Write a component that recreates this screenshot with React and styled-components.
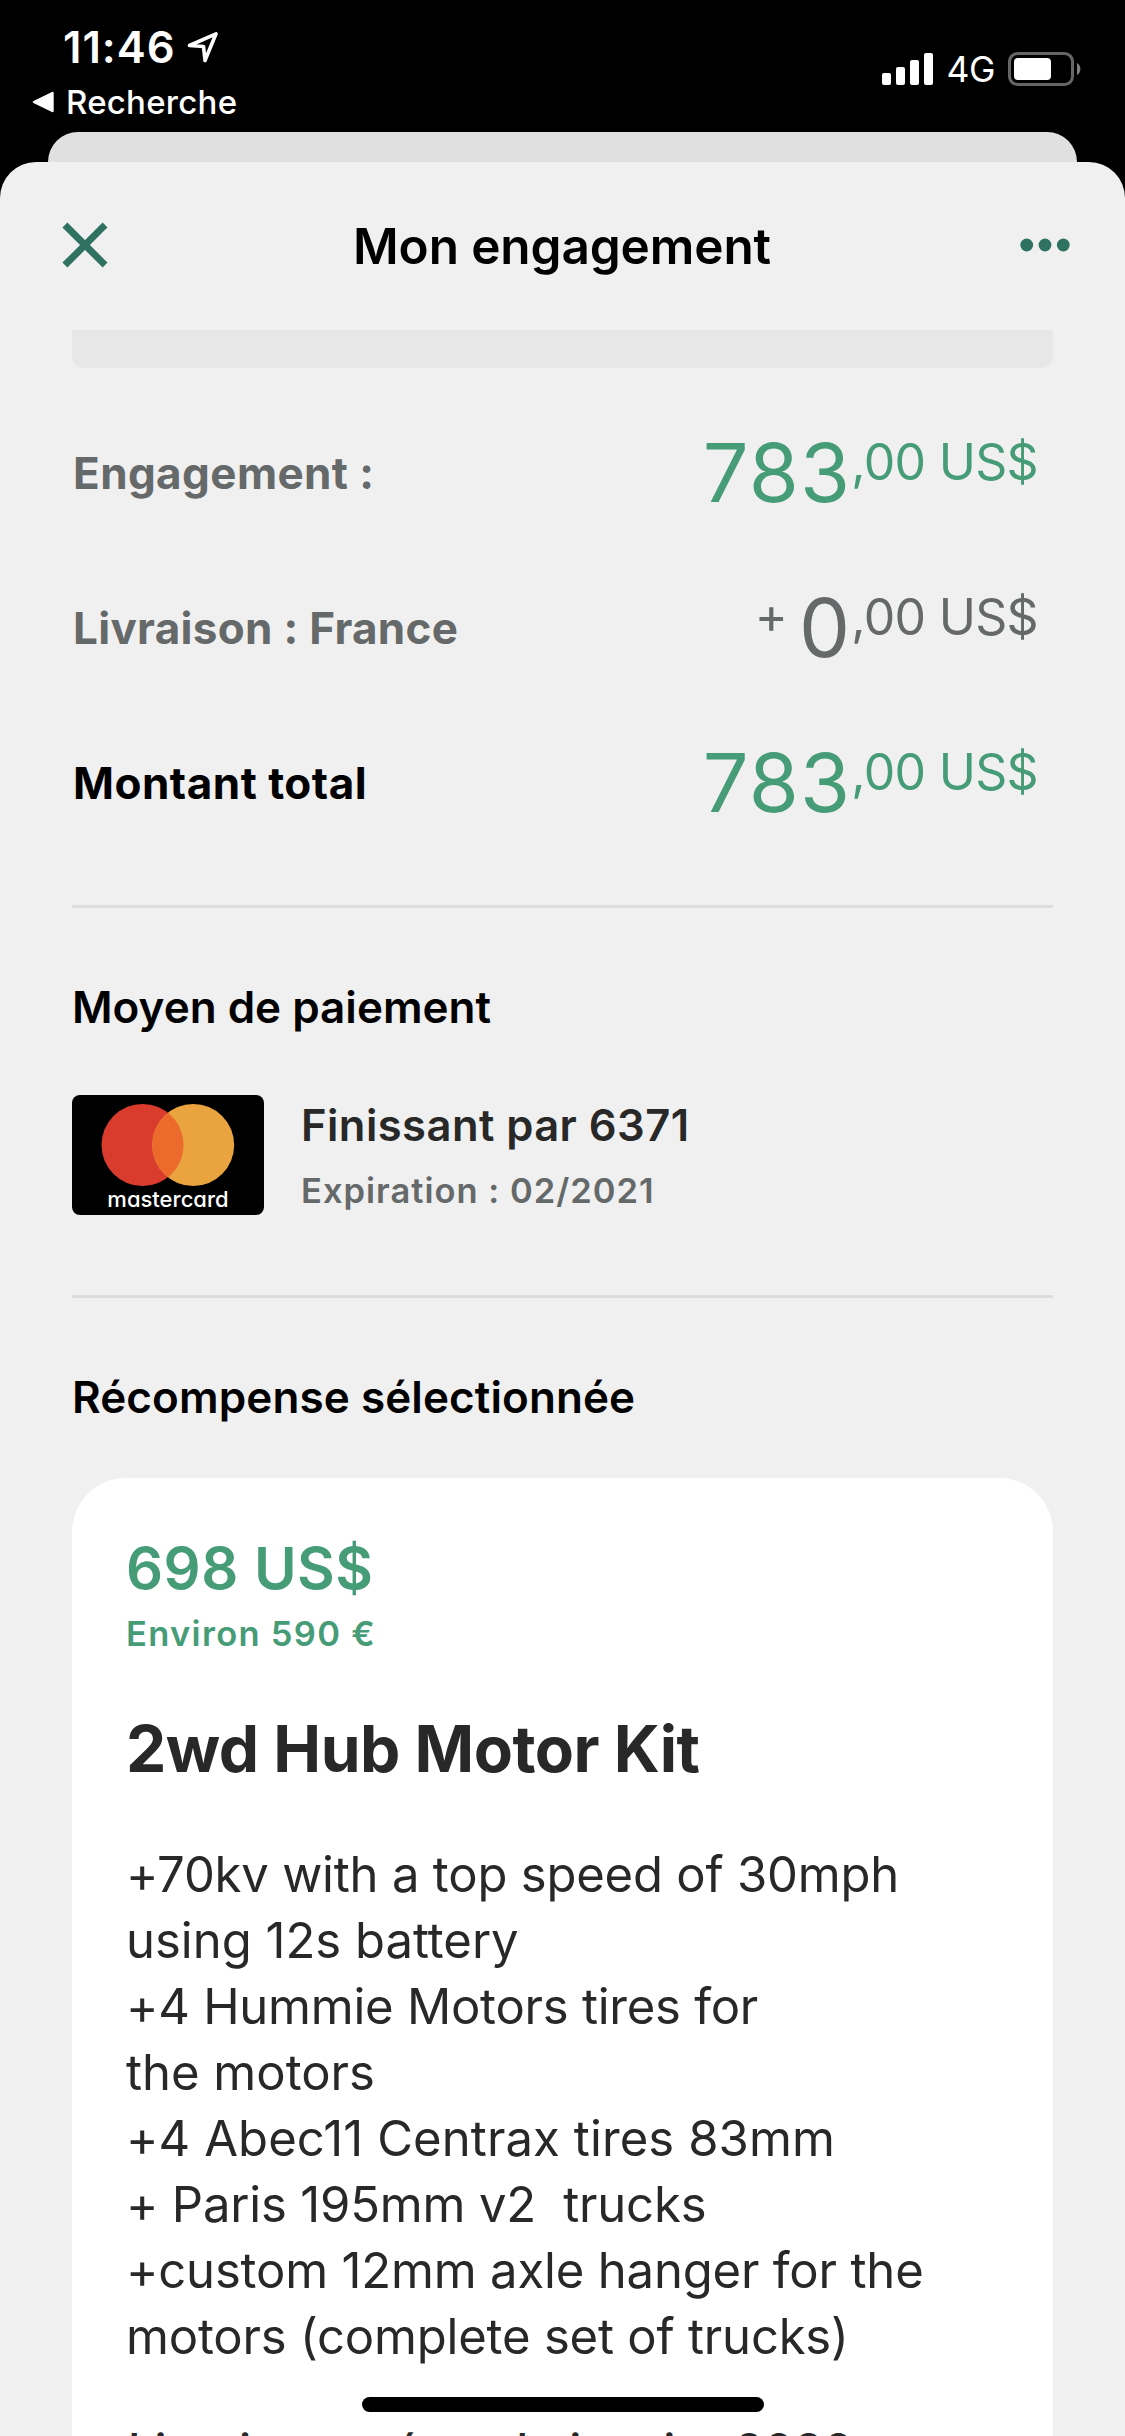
import React from 'react';
import styled, { createGlobalStyle } from 'styled-components';

const GlobalStyle = createGlobalStyle`
  * {
    box-sizing: border-box;
  }

  body {
    margin: 0;
    background: #000;
    font-family: Inter, 'Liberation Sans', sans-serif;
  }
`;

const colors = {
  green: '#469c77',
  darkGreen: '#2f7261',
  gray: '#656969',
  ink: '#282828',
  sheet: '#f0f0f0',
};

// --- Screen & status bar ---
const Screen = styled.div`
  position: relative;
  display: flex;
  flex-direction: column;
  width: 1125px;
  height: 2436px;
  overflow: hidden;
  background: #000;
`;

const StatusBar = styled.header`
  display: flex;
  flex: none;
  justify-content: space-between;
  height: 132px;
  padding: 25px 43px 0 32px;
  color: #fff;
`;

const TimeRow = styled.div`
  display: flex;
  align-items: center;
  gap: 11px;
  height: 44px;
  padding-left: 31px;
  font-size: 43.6px;
  font-weight: 600;
  letter-spacing: 1px;
`;

const BackLink = styled.div`
  display: flex;
  align-items: center;
  gap: 11px;
  height: 40px;
  margin-top: 13px;
  font-size: 33px;
  font-weight: 500;
  letter-spacing: 0.25px;
`;

const Indicators = styled.div`
  display: flex;
  align-items: center;
  height: 88px;
`;

const Network = styled.span`
  margin: 1px 13px 0 13px;
  font-size: 35.5px;
  letter-spacing: -0.5px;
`;

// --- Sheets ---
const BackSheet = styled.div`
  flex: none;
  height: 30px;
  margin: 0 48px;
  border-radius: 30px 30px 0 0;
  background: #e0e0e0;
`;

const Sheet = styled.main`
  flex: 1;
  min-height: 0;
  border-radius: 36px 36px 0 0;
  background: ${colors.sheet};
`;

const SheetHeader = styled.div`
  display: grid;
  grid-template-columns: 150px 1fr 150px;
  align-items: center;
  height: 168px;
  padding: 0 55px 0 57px;
  color: ${colors.darkGreen};
`;

const IconButton = styled.button`
  display: flex;
  justify-content: ${({ $end }) => ($end ? 'flex-end' : 'flex-start')};
  padding: 0 0 2px ${({ $end }) => ($end ? 0 : 5)}px;
  border: 0;
  background: none;
  color: inherit;
`;

const Title = styled.h1`
  margin: 0;
  padding-right: 3px;
  color: #000;
  font-size: 49.5px;
  font-weight: 600;
  letter-spacing: -0.1px;
  text-align: center;
  white-space: nowrap;
`;

const Content = styled.div`
  padding: 0 72px;
`;

const BannerEnd = styled.div`
  height: 38px;
  margin-bottom: 28px;
  border-radius: 0 0 12px 12px;
  background: #e7e7e7;
`;

const Divider = styled.hr`
  height: 3px;
  margin: 0;
  border: 0;
  background: #dcdcdc;
`;

// --- Amounts ---
const Amounts = styled.section`
  padding-bottom: 44px;
`;

const AmountRow = styled.div`
  display: flex;
  align-items: center;
  justify-content: space-between;
  height: 155px;
  padding: 0 15px 0 1px;
`;

const AmountLabel = styled.span`
  padding-bottom: 2px;
  color: ${({ $strong }) => ($strong ? '#000' : colors.gray)};
  font-size: 44px;
  font-weight: 700;
  letter-spacing: ${({ $tracking }) => $tracking}px;
  white-space: pre;
`;

const Amount = styled.span`
  display: flex;
  align-items: flex-start;
  color: ${({ $muted }) => ($muted ? colors.gray : colors.green)};
`;

const Plus = styled.span`
  margin-right: 11px;
  font-size: 50px;
  line-height: 33px;
`;

const Units = styled.span`
  font-size: 81px;
  line-height: 59px;
  letter-spacing: 1.2px;
`;

const Cents = styled.span`
  font-size: 50px;
  line-height: 37px;
  letter-spacing: -0.7px;
`;

// --- Payment method ---
const SectionTitle = styled.h2`
  margin: 69px 0 0;
  color: #000;
  font-size: 44px;
  font-weight: 600;
  line-height: 60px;
  letter-spacing: ${({ $tracking }) => $tracking}px;
`;

const PaymentMethod = styled.div`
  display: flex;
  gap: 37px;
  height: 120px;
  margin: 58px 0 80px;
`;

const CardLogo = styled.div`
  display: flex;
  flex-direction: column;
  align-items: center;
  width: 192px;
  height: 120px;
  padding-top: 8px;
  border-radius: 8px;
  background: #000;
`;

const CardBrand = styled.span`
  color: #fff;
  font-size: 22px;
  font-weight: 500;
  line-height: 24px;
  font-feature-settings: 'cv11';
`;

const CardNumber = styled.div`
  margin-top: 5px;
  color: ${colors.ink};
  font-size: 43.5px;
  font-weight: 600;
  line-height: 50px;
  letter-spacing: 0.45px;
`;

const CardExpiry = styled.div`
  margin-top: 21px;
  color: ${colors.gray};
  font-size: 34.5px;
  font-weight: 600;
  line-height: 40px;
  letter-spacing: 1px;
`;

// --- Reward ---
const RewardCard = styled.article`
  margin-top: 51px;
  height: 1200px;
  padding: 55px 54px 0;
  border-radius: 54px;
  background: #fff;
  color: ${colors.ink};
`;

const RewardPrice = styled.div`
  color: ${colors.green};
  font-size: 58px;
  font-weight: 600;
  line-height: 70px;
  letter-spacing: 0.5px;
`;

const RewardConversion = styled.div`
  margin-top: 9px;
  color: ${colors.green};
  font-size: 34.5px;
  font-weight: 600;
  line-height: 44px;
  letter-spacing: 1.3px;
`;

const RewardName = styled.h3`
  margin: 53px 0 0;
  font-size: 64px;
  font-weight: 700;
  line-height: 80px;
  letter-spacing: -0.5px;
`;

const RewardText = styled.div`
  margin-top: 53px;
`;

const RewardLine = styled.p`
  margin: 0;
  font-size: 49px;
  line-height: 66px;
  letter-spacing: ${({ $tracking }) => $tracking}px;
  white-space: pre;
`;

const Delivery = styled.p`
  margin: 50px 0 0;
  padding-left: 2px;
  font-size: 46px;
  font-weight: 500;
  line-height: 60px;
  letter-spacing: 0.7px;
`;

// The home indicator floats above the scrolled content
const HomeIndicator = styled.div`
  position: absolute;
  left: 362px;
  bottom: 24px;
  width: 402px;
  height: 15px;
  border-radius: 8px;
  background: #000;
`;

// --- Icons ---
const LocationIcon = () => (
  <svg width="32" height="32" viewBox="0 0 32 32" fill="none">
    <path
      d="M2.5 14.5 L29 2.8 L18 29.5 L16.5 15.5 Z"
      stroke="#fff"
      strokeWidth="3.6"
      strokeLinejoin="round"
    />
  </svg>
);

const BackTriangle = () => (
  <svg width="23" height="22" viewBox="0 0 23 22">
    <path
      d="M2 11 L20.5 2 V20 Z"
      fill="#fff"
      stroke="#fff"
      strokeWidth="2.4"
      strokeLinejoin="round"
    />
  </svg>
);

const SignalIcon = () => (
  <svg width="52" height="32" viewBox="0 0 52 32" fill="#fff">
    <rect x="0" y="20" width="9" height="12" rx="2" />
    <rect x="14" y="14" width="9" height="18" rx="2" />
    <rect x="28" y="7" width="9" height="25" rx="2" />
    <rect x="42" y="0" width="9" height="32" rx="2" />
  </svg>
);

const BatteryIcon = () => (
  <svg width="74" height="34" viewBox="0 0 74 34">
    <rect x="1.5" y="1.5" width="63" height="31" rx="8" fill="none" stroke="#666" strokeWidth="3" />
    <rect x="6" y="6" width="37" height="22" rx="4" fill="#fff" />
    <path d="M69 11 a7 7 0 0 1 0 12 Z" fill="#808080" />
  </svg>
);

const CloseIcon = () => (
  <svg width="46" height="46" viewBox="0 0 46 46">
    <path
      d="M5.4 5.4 L40.6 40.6 M40.6 5.4 L5.4 40.6"
      stroke="currentColor"
      strokeWidth="7"
      strokeLinecap="square"
    />
  </svg>
);

const MoreIcon = () => (
  <svg width="50" height="14" viewBox="0 0 50 14" fill="currentColor">
    <circle cx="6.7" cy="7" r="6.4" />
    <circle cx="25" cy="7" r="6.4" />
    <circle cx="43.3" cy="7" r="6.4" />
  </svg>
);

const CardCircles = () => (
  <svg width="134" height="84" viewBox="0 0 134 84">
    <circle cx="41.5" cy="42" r="41" fill="#d93b2d" />
    <circle cx="92.2" cy="42" r="41" fill="#e9a33f" />
    <path d="M66.85 9.8 A41 41 0 0 1 66.85 74.2 A41 41 0 0 1 66.85 9.8 Z" fill="#ec6a2c" />
  </svg>
);

const rows = [
  { label: 'Engagement :', units: '783', tracking: 0.4 },
  { label: 'Livraison : France', units: '0', plus: true, tracking: 0.3 },
  { label: 'Montant total', units: '783', strong: true, tracking: 0.5 },
];

const rewardLines = [
  { text: '+70kv with a top speed of 30mph', tracking: -0.2 },
  { text: 'using 12s battery', tracking: 0 },
  { text: '+4 Hummie Motors tires for', tracking: -0.24 },
  { text: 'the motors', tracking: 0 },
  { text: '+4 Abec11 Centrax tires 83mm', tracking: 0.1 },
  { text: '+ Paris 195mm v2  trucks', tracking: -0.18 },
  { text: '+custom 12mm axle hanger for the', tracking: -0.17 },
  { text: 'motors (complete set of trucks)', tracking: -0.2 },
];

// --- Main Component ---
const App = () => (
  <>
    <GlobalStyle />
    <Screen>
      <StatusBar>
        <div>
          <TimeRow>
            11:46
            <LocationIcon />
          </TimeRow>
          <BackLink>
            <BackTriangle />
            Recherche
          </BackLink>
        </div>
        <Indicators>
          <SignalIcon />
          <Network>4G</Network>
          <BatteryIcon />
        </Indicators>
      </StatusBar>
      <BackSheet />
      <Sheet>
        <SheetHeader>
          <IconButton aria-label="Fermer">
            <CloseIcon />
          </IconButton>
          <Title>Mon engagement</Title>
          <IconButton aria-label="Plus" $end>
            <MoreIcon />
          </IconButton>
        </SheetHeader>
        <Content>
          <BannerEnd />
          <Amounts>
            {rows.map((row) => (
              <AmountRow key={row.label}>
                <AmountLabel $strong={row.strong} $tracking={row.tracking}>
                  {row.label}
                </AmountLabel>
                <Amount $muted={row.plus}>
                  {row.plus && <Plus>+</Plus>}
                  <Units>{row.units}</Units>
                  <Cents>,00 US$</Cents>
                </Amount>
              </AmountRow>
            ))}
          </Amounts>
          <Divider />
          <SectionTitle $tracking={0}>Moyen de paiement</SectionTitle>
          <PaymentMethod>
            <CardLogo>
              <CardCircles />
              <CardBrand>mastercard</CardBrand>
            </CardLogo>
            <div>
              <CardNumber>Finissant par 6371</CardNumber>
              <CardExpiry>Expiration : 02/2021</CardExpiry>
            </div>
          </PaymentMethod>
          <Divider />
          <SectionTitle $tracking={0.1}>Récompense sélectionnée</SectionTitle>
          <RewardCard>
            <RewardPrice>698 US$</RewardPrice>
            <RewardConversion>Environ 590 €</RewardConversion>
            <RewardName>2wd Hub Motor Kit</RewardName>
            <RewardText>
              {rewardLines.map((line) => (
                <RewardLine key={line.text} $tracking={line.tracking}>
                  {line.text}
                </RewardLine>
              ))}
            </RewardText>
            <Delivery>Livraison prévue le janvier 2020</Delivery>
          </RewardCard>
        </Content>
      </Sheet>
      <HomeIndicator />
    </Screen>
  </>
);

export default App;
